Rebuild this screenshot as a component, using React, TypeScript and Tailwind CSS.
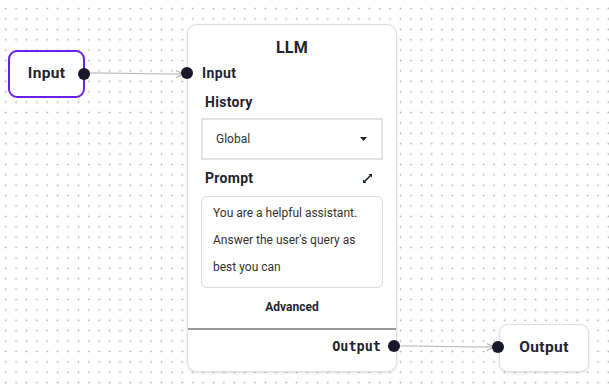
import React from 'react'

const FONT = { fontFamily: 'Roboto, "Noto Sans", sans-serif' }

function Handle({ className }: { className: string }) {
  return <span className={`absolute h-3 w-3 -translate-x-1/2 -translate-y-1/2 rounded-full bg-[#1a192b] ${className}`} />
}

function Edges() {
  return (
    <svg className="absolute inset-0" width="609" height="390">
      <defs>
        <marker id="arrow" markerWidth="10" markerHeight="10" refX="8" refY="5" orient="auto" markerUnits="userSpaceOnUse">
          <path d="M1,1.5 L8,5 L1,8.5" fill="none" stroke="#b1b1b7" strokeWidth="1.2" />
        </marker>
      </defs>
      <path d="M84,73 C134,73 134,74 183,74" fill="none" stroke="#b1b1b7" strokeWidth="1" markerEnd="url(#arrow)" />
      <path d="M394,346 C444,346 444,347 494,347" fill="none" stroke="#b1b1b7" strokeWidth="1" markerEnd="url(#arrow)" />
    </svg>
  )
}

function ExpandIcon() {
  return (
    <svg width="11" height="11" viewBox="0 0 11 11">
      <path d="M6.5 1 H10 V4.5 Z" fill="#1a2233" />
      <path d="M1 6.5 V10 H4.5 Z" fill="#1a2233" />
      <path d="M8.8 2.2 L2.2 8.8" stroke="#1a2233" strokeWidth="1.6" />
    </svg>
  )
}

export default function App() {
  return (
    <div
      className="relative h-[390px] w-[609px] overflow-hidden bg-white bg-[radial-gradient(circle,#b4b4b4_0.75px,transparent_1.1px)] bg-[length:10.4px_10.4px] bg-[position:0.5px_3.4px] text-[#1f2430]"
      style={FONT}
    >
      <Edges />

      {/* Input node */}
      <div className="absolute left-[8px] top-[50px] flex h-[48px] w-[77px] items-center justify-center rounded-[9px] border-2 border-[#6a1ff2] bg-white text-[15.5px] font-bold tracking-[0.3px]">
        Input
        <Handle className="left-[74px] top-[22px]" />
      </div>

      {/* LLM node */}
      <div className="absolute left-[187px] top-[24px] flex h-[348px] w-[210px] flex-col rounded-[10px] border border-[#dedede] bg-white shadow-[0_1px_3px_rgba(0,0,0,0.12)]">
        <div className="mt-[13px] h-5 text-center text-[16px] font-bold leading-5 tracking-[0.3px]">LLM</div>
        <div className="relative mt-[6px] h-[18px] pl-[14px] text-[14px] font-bold leading-[18px] tracking-[0.4px]">
          <Handle className="left-[-1px] top-[9px]" />
          Input
        </div>
        <div className="px-[13px]">
          <div className="mt-[11px] h-[18px] pl-[4px] text-[14px] font-bold leading-[18px] tracking-[0.3px]">History</div>
          <div className="mt-[7px] flex h-[42px] items-center justify-between border-2 border-[#e2e2e2] pl-[13px] pr-[14px] text-[12px] text-[#333]">
            <span>Global</span>
            <svg width="7" height="4" viewBox="0 0 7 4"><path d="M0 0 H7 L3.5 4 Z" fill="#222" /></svg>
          </div>
          <div className="mt-[9px] flex h-[18px] items-center justify-between pl-[4px] pr-[10px] text-[14px] font-bold leading-[18px] tracking-[0.3px]">
            <span>Prompt</span>
            <ExpandIcon />
          </div>
          <div className="mt-[9px] h-[92px] rounded-[6px] border border-[#dcdcdc] px-[11px] pt-[3px] text-[12px] leading-[27px] text-[#333]">
            You are a helpful assistant.
            <br />
            Answer the user's query as
            <br />
            best you can
          </div>
          <div className="mt-[10px] h-[18px] text-center text-[12px] font-bold leading-[18px]">Advanced</div>
        </div>
        <div className="mt-[12px] h-[2px] bg-[#9a9a9a]" />
        <div
          className="relative mt-[7px] h-[18px] pr-[15px] text-right text-[13.5px] font-bold leading-[18px]"
          style={{ fontFamily: '"DejaVu Sans Mono", monospace' }}
        >
          Output
          <Handle className="left-[206px] top-[9px]" />
        </div>
      </div>

      {/* Output node */}
      <div className="absolute left-[499px] top-[324px] flex h-[48px] w-[90px] items-center justify-center rounded-[9px] border border-[#dedede] bg-white text-[15.5px] font-bold tracking-[0.4px] shadow-[0_1px_3px_rgba(0,0,0,0.12)]">
        Output
        <Handle className="left-[-2px] top-[22px]" />
      </div>
    </div>
  )
}
